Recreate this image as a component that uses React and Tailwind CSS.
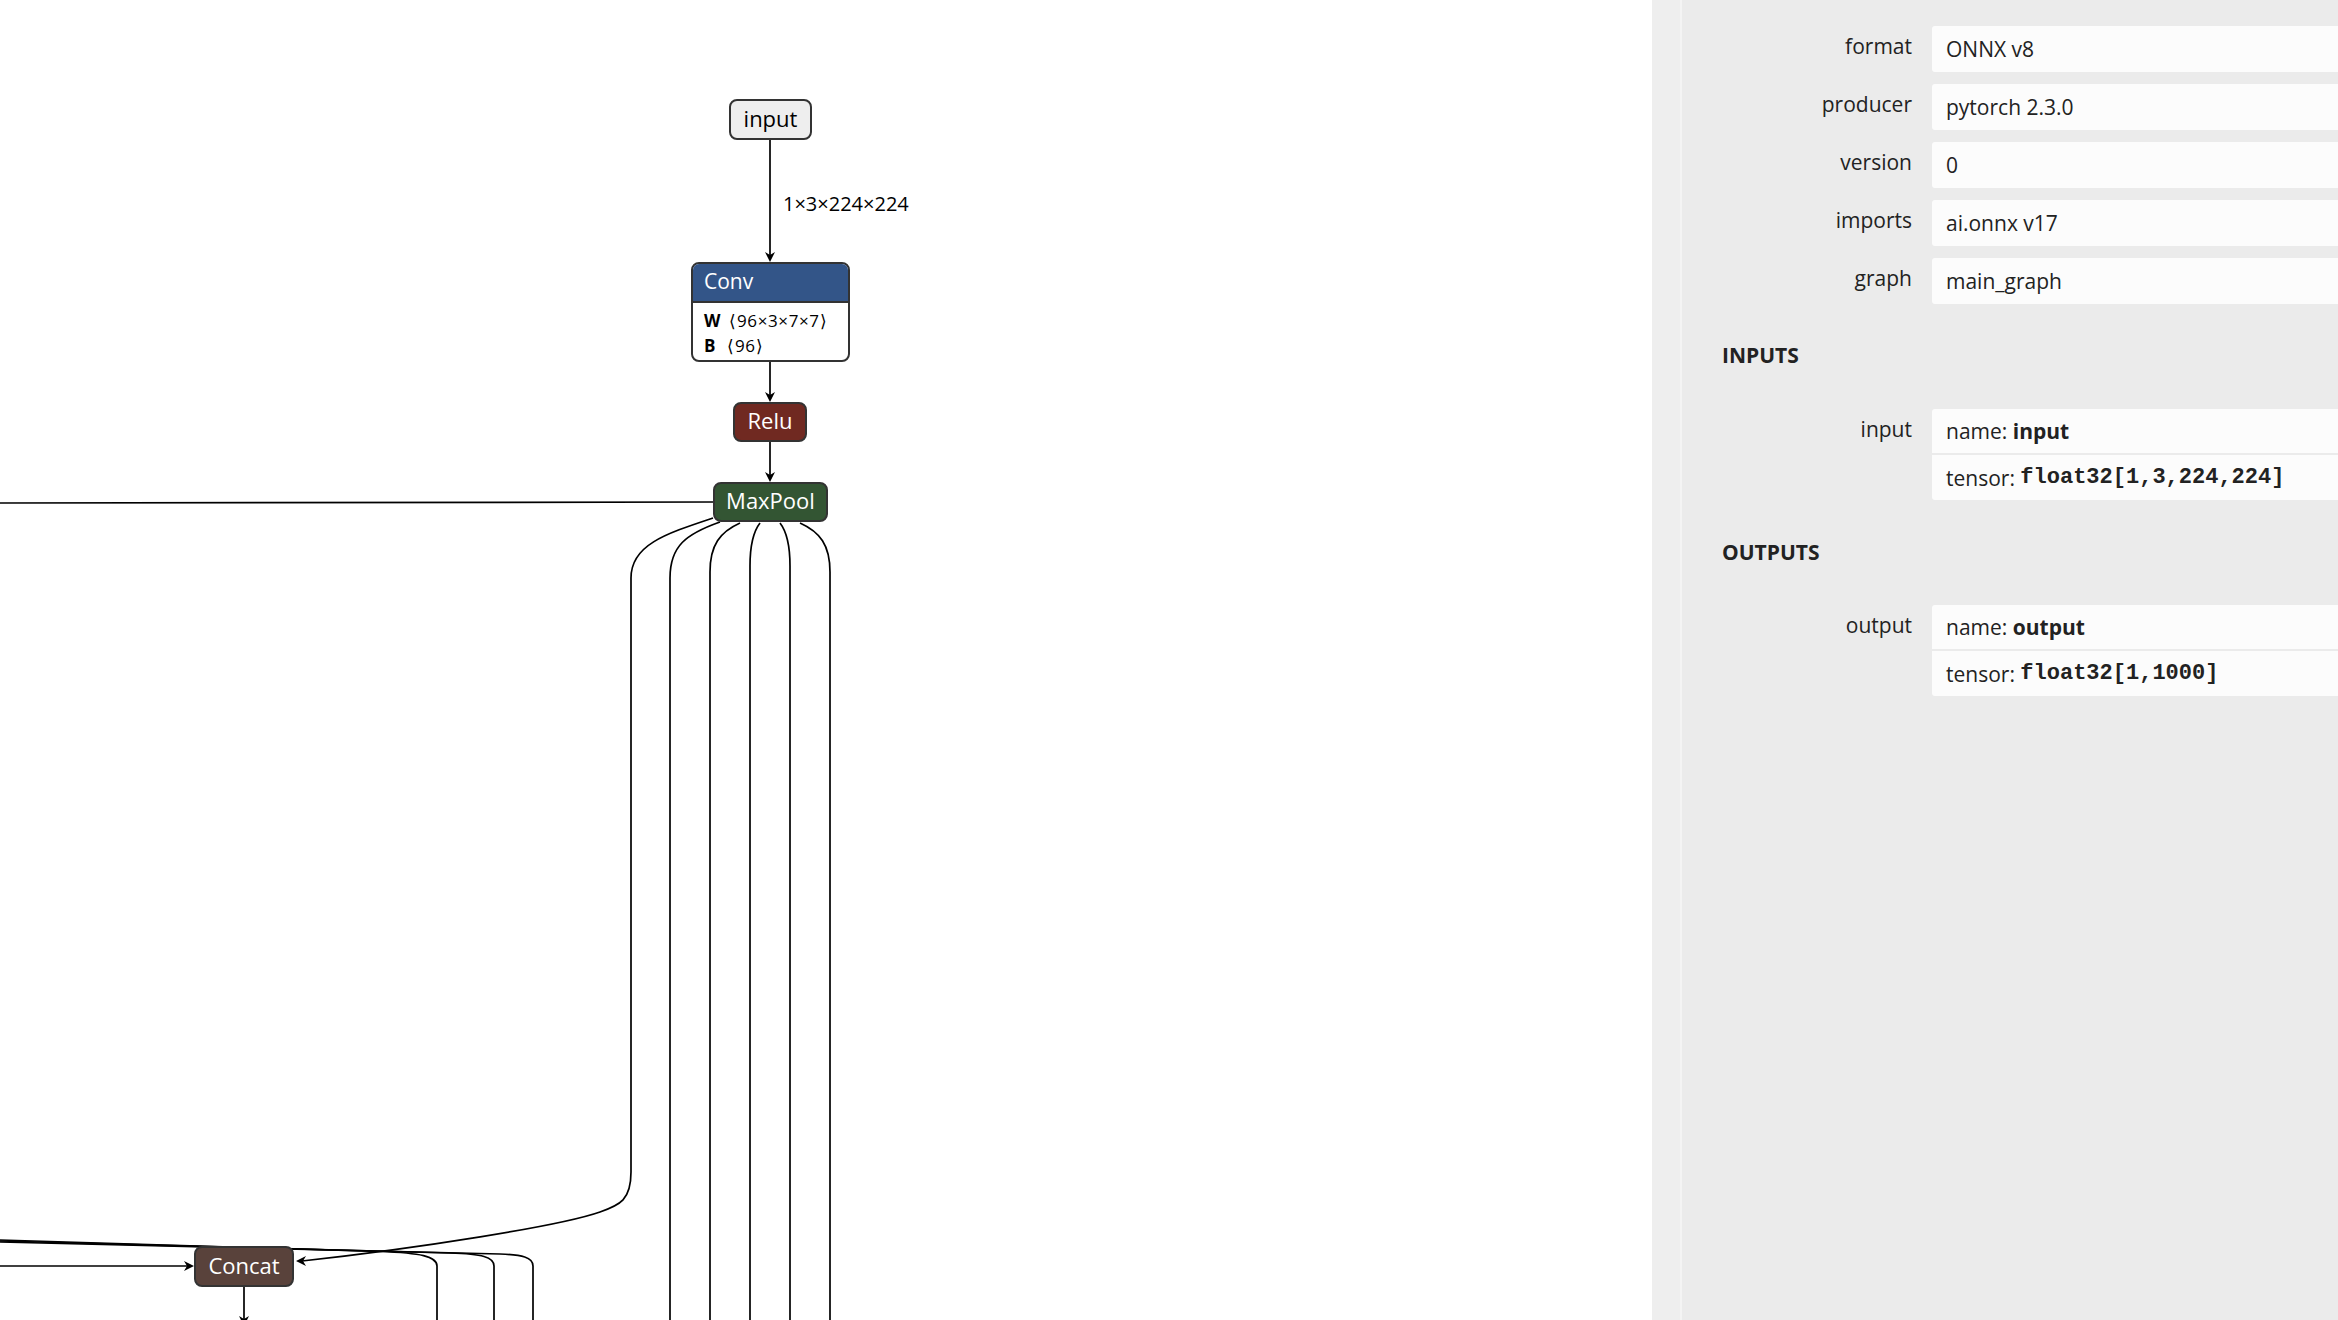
import React from 'react'

const edges = [
  // input -> Conv -> Relu -> MaxPool
  'M770,140 L770,256',
  'M770,362 L770,396',
  'M770,442 L770,476',
  // MaxPool output going left
  'M0,503 L713,502',
  // MaxPool fan-out
  'M713,518 C665,534 631,545 631,578 L631,1172 C631,1200 620,1205 600,1212 C560,1226 420,1248 302,1261',
  'M720,522 C686,534 670,546 670,578 L670,1330',
  'M740,523 C720,532 710,545 710,572 L710,1330',
  'M760,523 C753,532 750,545 750,566 L750,1330',
  'M780,523 C787,532 790,545 790,566 L790,1330',
  'M800,523 C820,532 830,545 830,572 L830,1330',
  // bundle on the left
  'M0,1240 L380,1251.5 C420,1253 437,1256 437,1266 L437,1330',
  'M0,1241 L450,1253 C482,1254 494,1257 494,1266 L494,1330',
  'M0,1242 L500,1254 C522,1255 533,1257 533,1266 L533,1330',
  // into Concat from the left, and out of it
  'M0,1266 L188,1266',
  'M244,1287 L244,1320',
]

const down = (x, y) => `${x},${y} ${x - 5},${y - 10} ${x},${y - 7} ${x + 5},${y - 10}`
const left = (x, y) => `${x},${y} ${x + 10},${y - 5} ${x + 7},${y} ${x + 10},${y + 5}`
const right = (x, y) => `${x},${y} ${x - 10},${y - 5} ${x - 7},${y} ${x - 10},${y + 5}`

const arrows = [down(770, 262), down(770, 402), down(770, 482), left(296, 1261), right(194, 1266), down(244, 1326)]

function Graph() {
  return (
    <div className="relative flex-1 overflow-hidden bg-white font-['Open_Sans',sans-serif]">
      <svg className="absolute inset-0 h-full w-full" viewBox="0 0 1652 1320">
        {edges.map((d, i) => (
          <path key={i} d={d} fill="none" stroke="#000" strokeWidth="1.7" />
        ))}
        {arrows.map((p, i) => (
          <polygon key={i} points={p} fill="#000" />
        ))}
      </svg>

      <div className="absolute left-[783px] top-[190px] text-[20px] leading-[28px] text-black">1×3×224×224</div>

      <div className="absolute left-[729px] top-[99px] flex h-[41px] w-[83px] items-center justify-center rounded-[8px] border-2 border-[#333] bg-[#eeeeee] pb-[3px] text-[22px] text-black">
        input
      </div>

      <div className="absolute left-[691px] top-[262px] flex h-[100px] w-[159px] flex-col overflow-hidden rounded-[8px] border-2 border-[#333] bg-white">
        <div className="flex h-[39px] items-center border-b-2 border-[#333] bg-[#335588] px-[11px] pb-[2px] text-[21px] text-white">Conv</div>
        <div className="flex flex-col px-[11px] pt-[5px] text-[17px] leading-[25px] text-black">
          <div>
            <span className="font-bold">W</span>
            <span className="ml-[9px] tracking-[0.6px]">⟨96×3×7×7⟩</span>
          </div>
          <div>
            <span className="font-bold">B</span>
            <span className="ml-[12px] tracking-[0.6px]">⟨96⟩</span>
          </div>
        </div>
      </div>

      <div className="absolute left-[733px] top-[402px] flex h-[40px] w-[74px] items-center justify-center rounded-[8px] border-2 border-[#333] bg-[#702921] pb-[3px] text-[22px] text-white">
        Relu
      </div>

      <div className="absolute left-[713px] top-[482px] flex h-[40px] w-[115px] items-center justify-center rounded-[8px] border-2 border-[#333] bg-[#335533] pb-[3px] text-[22px] text-white">
        MaxPool
      </div>

      <div className="absolute left-[194px] top-[1246px] flex h-[41px] w-[100px] items-center justify-center rounded-[8px] border-2 border-[#333] bg-[#59423b] pb-[3px] text-[22px] text-white">
        Concat
      </div>
    </div>
  )
}

function Row({ label, children }) {
  return (
    <div className="flex">
      <div className="w-[190px] shrink-0 pt-[6px] text-right leading-[28px]">{label}</div>
      <div className="ml-[20px] flex-1">{children}</div>
    </div>
  )
}

function Value({ children }) {
  return <div className="flex h-[46px] items-center rounded-l-[3px] bg-[#fcfcfc] px-[14px] leading-[28px]">{children}</div>
}

function Tensor({ name, type }) {
  return (
    <div className="flex flex-col rounded-l-[3px] bg-[#fcfcfc] leading-[28px]">
      <div className="flex h-[46px] items-center border-b-2 border-[#ebebeb] px-[14px]">
        <span>name:&nbsp;</span>
        <span className="font-bold">{name}</span>
      </div>
      <div className="flex h-[45px] items-center px-[14px]">
        <span>tensor:&nbsp;</span>
        <span className="font-['Liberation_Mono',monospace] text-[22px] font-bold">{type}</span>
      </div>
    </div>
  )
}

function Sidebar() {
  const props = [
    ['format', 'ONNX v8'],
    ['producer', 'pytorch 2.3.0'],
    ['version', '0'],
    ['imports', 'ai.onnx v17'],
    ['graph', 'main_graph'],
  ]
  return (
    <div className="flex w-[686px] shrink-0">
      <div className="w-[28px] bg-[#eeeeee]" />
      <div className="w-[2px] bg-[#f4f4f4]" />
      <div className="flex-1 overflow-hidden bg-[#ebebeb] pl-[40px] pt-[26px] font-['Open_Sans',sans-serif] text-[21px] text-[#222]">
        <div className="flex flex-col gap-[12px]">
          {props.map(([k, v]) => (
            <Row key={k} label={k}>
              <Value>{v}</Value>
            </Row>
          ))}
        </div>

        <div className="mb-[40px] mt-[37px] font-bold leading-[28px]">INPUTS</div>
        <Row label="input">
          <Tensor name="input" type="float32[1,3,224,224]" />
        </Row>

        <div className="mb-[39px] mt-[38px] font-bold leading-[28px]">OUTPUTS</div>
        <Row label="output">
          <Tensor name="output" type="float32[1,1000]" />
        </Row>
      </div>
    </div>
  )
}

export default function App() {
  return (
    <div className="flex h-[1320px] w-full overflow-hidden">
      <Graph />
      <Sidebar />
    </div>
  )
}
